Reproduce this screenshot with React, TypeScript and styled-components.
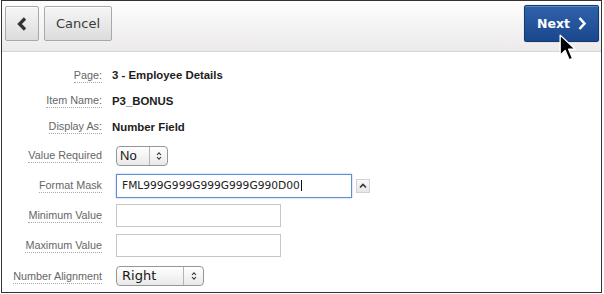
import styled, { createGlobalStyle } from "styled-components";

const GlobalStyle = createGlobalStyle`
  html, body {
    margin: 0;
    padding: 0;
    background: #fff;
  }
  * {
    box-sizing: border-box;
  }
`;

const Frame = styled.div`
  position: relative;
  width: 601px;
  height: 293px;
  margin-left: 1px;
  border: 1px solid #333;
  background: #fff;
  overflow: hidden;
  font-family: "Liberation Sans", Arial, sans-serif;
`;

const Toolbar = styled.div`
  height: 51px;
  padding: 5px 2px 10px 3px;
  display: flex;
  align-items: center;
  gap: 5px;
  background: linear-gradient(#fefefe, #eceaeb);
  border-bottom: 1px solid #d8d4d6;
`;

const Spacer = styled.div`
  flex: 1;
`;

const ToolButton = styled.button<{ $w: number }>`
  width: ${(p) => p.$w}px;
  height: 35px;
  padding: 0;
  display: flex;
  align-items: center;
  justify-content: center;
  border: 1px solid #a9a9a9;
  border-radius: 2px;
  background: linear-gradient(#f6f6f6, #dcdcdc);
  box-shadow: inset 0 1px 0 #fff;
  color: #3a3a3a;
  font-family: "DejaVu Sans", sans-serif;
  font-size: 13px;
`;

const NextButton = styled.button`
  width: 75px;
  height: 37px;
  padding: 0 0 0 12px;
  display: flex;
  align-items: center;
  gap: 8px;
  border: 1px solid #143a74;
  border-radius: 2px;
  background: linear-gradient(#2f62ab, #1a478c);
  box-shadow: inset 0 1px 0 rgba(255, 255, 255, 0.25), 0 0 1px #6d8fc4;
  color: #fff;
  font-family: "DejaVu Sans", sans-serif;
  font-weight: bold;
  font-size: 12.5px;
`;

const Form = styled.div`
  padding-top: 10px;
  display: flex;
  flex-direction: column;
`;

const Row = styled.div<{ $h: number }>`
  height: ${(p) => p.$h}px;
  display: grid;
  grid-template-columns: 100px 1fr;
  column-gap: 10px;
  align-items: center;
`;

const LabelCell = styled.div`
  text-align: right;
  line-height: 12px;
`;

const Label = styled.span`
  display: inline-block;
  padding-bottom: 1px;
  border-bottom: 1px dotted #a8a8a8;
  color: #666;
  font-size: 10.8px;
`;

const Value = styled.div`
  color: #1c1c1c;
  font-weight: bold;
  font-size: 11.4px;
`;

const Controls = styled.div`
  display: flex;
  align-items: center;
  gap: 4px;
  padding-left: 4px;
`;

const SelectBox = styled.div<{ $w: number; $font: string }>`
  width: ${(p) => p.$w}px;
  height: 20px;
  display: flex;
  align-items: stretch;
  border: 1px solid #969696;
  border-radius: 4px;
  background: linear-gradient(#ffffff, #e9e9e9);
  font-family: ${(p) => p.$font};
  font-size: 13px;
  color: #151515;
`;

const SelectText = styled.span<{ $pad: number }>`
  flex: 1;
  padding-left: ${(p) => p.$pad}px;
  line-height: 18px;
`;

const SelectArrows = styled.span<{ $w: number }>`
  width: ${(p) => p.$w}px;
  border-left: 1px solid #b4b4b4;
  display: flex;
  align-items: center;
  justify-content: center;
`;

const TextField = styled.div<{ $w: number; $h: number; $focus?: boolean }>`
  width: ${(p) => p.$w}px;
  height: ${(p) => p.$h}px;
  padding-left: 5px;
  display: flex;
  align-items: center;
  border: 1px solid ${(p) => (p.$focus ? "#5f8fd2" : "#c6c6c6")};
  box-shadow: ${(p) => (p.$focus ? "0 0 2px rgba(95, 143, 210, 0.55)" : "none")};
  background: #fff;
  font-family: "DejaVu Sans", sans-serif;
  font-size: 10.67px;
  color: #222;
`;

const Caret = styled.span`
  width: 1px;
  height: 11px;
  margin-left: 1px;
  background: #111;
`;

const MiniButton = styled.div`
  width: 14px;
  height: 14px;
  display: flex;
  align-items: center;
  justify-content: center;
  border: 1px solid #d2d2d2;
  background: linear-gradient(#f8f8f8, #e6e6e6);
`;

const Pointer = styled.svg`
  position: absolute;
  left: 557px;
  top: 33px;
`;

const UpDown = () => (
  <svg width="6" height="10" viewBox="0 0 6 10">
    <path d="M1 4 L3 1.8 L5 4 M1 6 L3 8.2 L5 6" fill="none" stroke="#333" strokeWidth="1.1" />
  </svg>
);

const Select = ({ value, w, arrowW, font, pad }: { value: string; w: number; arrowW: number; font: string; pad: number }) => (
  <SelectBox $w={w} $font={font}>
    <SelectText $pad={pad}>{value}</SelectText>
    <SelectArrows $w={arrowW}>
      <UpDown />
    </SelectArrows>
  </SelectBox>
);

const Field = ({ label, children, h }: { label: string; children: React.ReactNode; h: number }) => (
  <Row $h={h}>
    <LabelCell>
      <Label>{label}</Label>
    </LabelCell>
    {children}
  </Row>
);

const App = () => {
  return (
    <>
      <GlobalStyle />
      <Frame>
        <Toolbar>
          <ToolButton $w={34}>
            <svg width="12" height="14" viewBox="0 0 12 14">
              <path d="M9 1.5 L3.5 7 L9 12.5" fill="none" stroke="#333" strokeWidth="3.2" />
            </svg>
          </ToolButton>
          <ToolButton $w={68}>Cancel</ToolButton>
          <Spacer />
          <NextButton>
            Next
            <svg width="8" height="13" viewBox="0 0 8 13">
              <path d="M1.5 1 L6.5 6.5 L1.5 12" fill="none" stroke="#fff" strokeWidth="2.6" />
            </svg>
          </NextButton>
        </Toolbar>

        <Form>
          <Field label="Page:" h={26}>
            <Value>3 - Employee Details</Value>
          </Field>
          <Field label="Item Name:" h={25}>
            <Value>P3_BONUS</Value>
          </Field>
          <Field label="Display As:" h={27}>
            <Value>Number Field</Value>
          </Field>
          <Field label="Value Required" h={31}>
            <Controls>
              <Select value="No" w={52} arrowW={18} font={'"Liberation Sans", Arial, sans-serif'} pad={3} />
            </Controls>
          </Field>
          <Field label="Format Mask" h={29}>
            <Controls>
              <TextField $w={236} $h={24} $focus>
                FML999G999G999G999G990D00
                <Caret />
              </TextField>
              <MiniButton>
                <svg width="8" height="6" viewBox="0 0 8 6">
                  <path d="M1 4.5 L4 1.5 L7 4.5" fill="none" stroke="#333" strokeWidth="1.6" />
                </svg>
              </MiniButton>
            </Controls>
          </Field>
          <Field label="Minimum Value" h={30}>
            <Controls>
              <TextField $w={165} $h={23} />
            </Controls>
          </Field>
          <Field label="Maximum Value" h={30}>
            <Controls>
              <TextField $w={165} $h={23} />
            </Controls>
          </Field>
          <Field label="Number Alignment" h={32}>
            <Controls>
              <Select value="Right" w={88} arrowW={20} font={'"DejaVu Sans", sans-serif'} pad={5} />
            </Controls>
          </Field>
        </Form>

        <Pointer width="18" height="28" viewBox="0 0 16 25">
          <path
            d="M1 1 L1 19 L5.5 14.8 L9 23 L12 21.7 L8.6 13.6 L14.5 13.6 Z"
            fill="#000"
            stroke="#fff"
            strokeWidth="1.2"
            strokeLinejoin="round"
          />
        </Pointer>
      </Frame>
    </>
  );
};

export default App;
